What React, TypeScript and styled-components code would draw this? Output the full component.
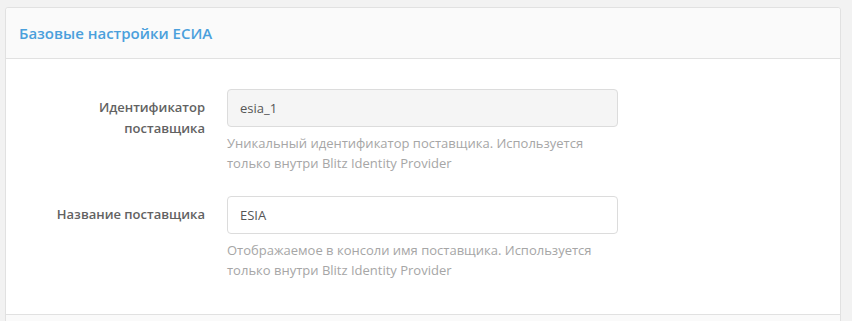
import React from "react";
import styled, { createGlobalStyle } from "styled-components";

const GlobalStyle = createGlobalStyle`
  html, body {
    margin: 0;
    padding: 0;
    background: #f2f2f2;
    font-family: "Open Sans", "Liberation Sans", sans-serif;
  }
  body {
    padding: 7px 11px 0 5px;
    overflow: hidden;
  }
`;

const Panel = styled.section`
  background: #fff;
  border: 1px solid #e1e1e1;
  border-radius: 3px 3px 0 0;
  box-sizing: border-box;
`;

const PanelHeader = styled.header`
  display: flex;
  align-items: center;
  height: 50px;
  padding: 0 13px;
  background: #fafafa;
  border-bottom: 1px solid #e1e1e1;
  border-radius: 3px 3px 0 0;
`;

const Title = styled.h3`
  margin: 0;
  font-size: 15px;
  font-weight: 600;
  color: #4aa0dc;
`;

const PanelBody = styled.div`
  padding: 30px 0 34px 43px;
  display: flex;
  flex-direction: column;
  gap: 23px;
`;

const FormRow = styled.div`
  display: grid;
  grid-template-columns: 156px 391px;
  column-gap: 22px;
  align-items: start;
`;

const Label = styled.label`
  padding-top: 8px;
  text-align: right;
  font-size: 13px;
  font-weight: 600;
  line-height: 21px;
  color: #626262;
`;

const Field = styled.div`
  display: flex;
  flex-direction: column;
`;

const Input = styled.input<{ $readOnly?: boolean }>`
  box-sizing: border-box;
  height: 38px;
  width: 100%;
  padding: 0 12px;
  border: 1px solid #dcdcdc;
  border-radius: 4px;
  background: ${(p) => (p.$readOnly ? "#f5f5f5" : "#fff")};
  font-family: inherit;
  font-size: 13px;
  color: #555;
  outline: none;
`;

const Help = styled.p`
  margin: 6px 0 0;
  font-size: 13px;
  line-height: 20px;
  color: #a6a6a6;
`;

const PanelFooter = styled.footer`
  height: 20px;
  background: #fafafa;
  border-top: 1px solid #e1e1e1;
`;

export default function App() {
  return (
    <>
      <GlobalStyle />
      <Panel>
        <PanelHeader>
          <Title>Базовые настройки ЕСИА</Title>
        </PanelHeader>
        <PanelBody>
          <FormRow>
            <Label>Идентификатор поставщика</Label>
            <Field>
              <Input $readOnly readOnly defaultValue="esia_1" />
              <Help>
                Уникальный идентификатор поставщика. Используется
                <br />
                только внутри Blitz Identity Provider
              </Help>
            </Field>
          </FormRow>
          <FormRow>
            <Label>Название поставщика</Label>
            <Field>
              <Input defaultValue="ESIA" />
              <Help>
                Отображаемое в консоли имя поставщика. Используется
                <br />
                только внутри Blitz Identity Provider
              </Help>
            </Field>
          </FormRow>
        </PanelBody>
        <PanelFooter />
      </Panel>
    </>
  );
}
